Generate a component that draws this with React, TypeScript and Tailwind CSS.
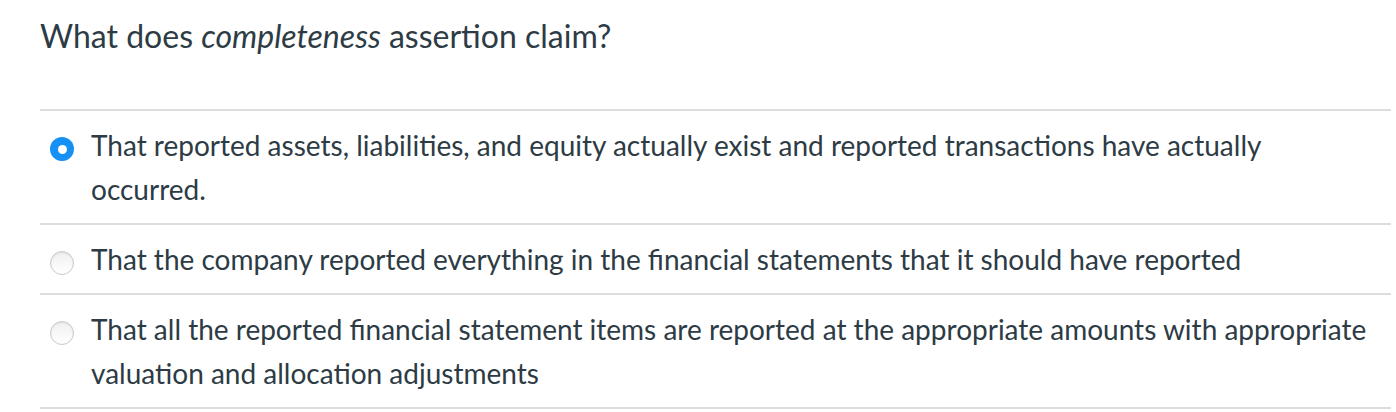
import React from 'react';

const ANSWERS = [
  {
    id: 'a1',
    text: 'That reported assets, liabilities, and equity actually exist and reported transactions have actually occurred.',
    selected: true,
  },
  {
    id: 'a2',
    text: 'That the company reported everything in the financial statements that it should have reported',
    selected: false,
  },
  {
    id: 'a3',
    text: 'That all the reported financial statement items are reported at the appropriate amounts with appropriate valuation and allocation adjustments',
    selected: false,
  },
];

const Radio: React.FC<{ checked: boolean }> = ({ checked }) =>
  checked ? (
    <span className="flex h-[24px] w-[24px] items-center justify-center rounded-full bg-[#1590f5]">
      <span className="h-[9px] w-[9px] rounded-full bg-white" />
    </span>
  ) : (
    <span className="h-[24px] w-[24px] rounded-full border border-[#c9c9c9] bg-gradient-to-b from-[#f0f0f0] to-white shadow-[inset_0_1px_2px_rgba(0,0,0,0.08)]" />
  );

export default function App() {
  return (
    <div className="bg-white px-[40px] pt-[12px] text-[#2d3b45] [font-family:Lato,'Open_Sans',sans-serif]">
      <h2 className="text-[32px] leading-[48px] font-normal">
        What does <em>completeness</em> assertion claim?
      </h2>
      <div className="mt-[49px] w-[1351px] border-t-2 border-[#dddddd]">
        {ANSWERS.map((a) => (
          <div key={a.id} className="flex items-start border-b-2 border-[#dddddd] py-[12px]">
            <div className="flex h-[44px] w-[51px] shrink-0 items-start pl-[10px] pt-[14px]">
              <Radio checked={a.selected} />
            </div>
            <p className="pr-[16px] text-[28px] leading-[44px]">{a.text}</p>
          </div>
        ))}
      </div>
    </div>
  );
}
